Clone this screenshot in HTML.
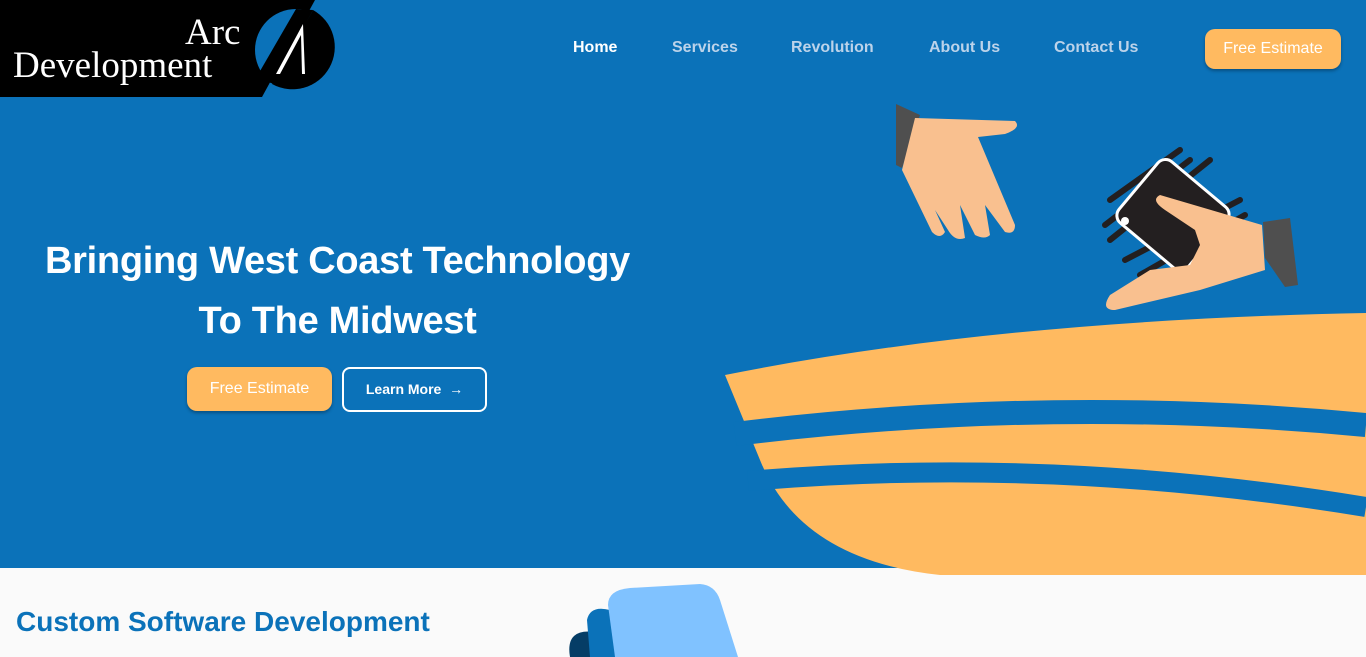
<!DOCTYPE html>
<html><head><meta charset="utf-8"><style>
*{margin:0;padding:0;box-sizing:border-box}
body{width:1366px;height:657px;overflow:hidden;background:#fafafa;font-family:"Liberation Sans",sans-serif;position:relative}
.hero{position:absolute;left:0;top:0;width:1366px;height:568px;background:#0b72b9}
.nav a{position:absolute;top:39px;font-weight:bold;font-size:16px;color:#bcd3ea;text-decoration:none}
.btn{position:absolute;background:#ffba60;color:#fff;border-radius:10px;font-size:16px;text-align:center;box-shadow:0 2px 3px rgba(0,0,0,.3)}
h1{position:absolute;left:0;width:675px;text-align:center;color:#fff;font-size:38px;font-weight:bold;line-height:60px;top:231px;letter-spacing:-0.3px}
</style></head><body>
<div class="hero"></div>
<svg style="position:absolute;left:0;top:0" width="1366" height="657">
<polygon points="0,0 315,0 262,97 0,97" fill="#000"/>
<circle cx="296" cy="50" r="41" fill="#0b72b9"/>
<path d="M313,10 A41,41 0 0 1 272,84 Z" fill="#000"/>
<path d="M296,9 L313,10 L274,84 L256,78 Z" fill="#000"/>
<path d="M276,74 L303,24 L305,74 L302,74 L301,35 L280,74 Z" fill="#fff"/>
<path d="M725,375 Q1000,320 1366,313 L1366,575 L940,575 Q800,560 760,460 Z" fill="#ffba60"/>
<path d="M735,434 Q1050,395 1366,425" stroke="#0b72b9" stroke-width="24" fill="none"/>
<path d="M748,481 Q1050,455 1366,507" stroke="#0b72b9" stroke-width="20" fill="none"/>
<path d="M896,104 L920,115 L902,168 L896,165 Z" fill="#4f4f4f"/>
<path d="M915,118 L1015,121 Q1022,128 1005,134 L978,137 L1015,225 Q1015,235 1005,232 L985,205 L990,235 Q985,240 975,235 L960,205 L965,238 Q955,242 948,230 L935,210 L945,232 Q940,240 932,232 L902,170 Z" fill="#f9c08f"/>
<g stroke="#231f20" stroke-width="6" stroke-linecap="round">
<path d="M1110,200 L1180,150 M1110,240 L1210,160 M1125,260 L1240,200 M1140,275 L1245,215 M1105,225 L1190,160"/>
</g>
<rect x="1128" y="175" width="90" height="80" rx="10" fill="#231f20" stroke="#fff" stroke-width="3" transform="rotate(40 1173 215)"/>
<circle cx="1125" cy="221" r="4" fill="#fff"/>
<path d="M1160,195 Q1150,200 1165,210 L1195,230 L1200,245 L1190,265 L1150,270 L1110,295 Q1100,310 1115,310 L1200,290 L1265,270 L1262,225 Z" fill="#f9c08f"/>
<path d="M1263,222 L1290,218 L1298,285 L1285,287 L1265,258 Z" fill="#4f4f4f"/>
<path d="M570,657 Q565,628 595,632 L610,657 Z" fill="#053d66"/>
<path d="M590,657 L587,620 Q590,605 610,610 L640,657 Z" fill="#0b72b9"/>
<path d="M615,657 L608,605 Q608,590 630,588 L700,584 Q715,585 720,600 L738,657 Z" fill="#80c2ff"/>
</svg>
<div style="position:absolute;left:185px;top:14px;color:#fff;font-family:'Liberation Serif',serif;font-size:37px;line-height:38px">Arc</div>
<div style="position:absolute;left:13px;top:47px;color:#fff;font-family:'Liberation Serif',serif;font-size:37px;line-height:38px">Development</div>
<div class="nav"><a style="left:573px;color:#fff">Home</a><a style="left:672px">Services</a><a style="left:791px">Revolution</a><a style="left:929px">About Us</a><a style="left:1054px">Contact Us</a></div>
<div class="btn" style="left:1205px;top:29px;width:136px;height:40px;line-height:40px">Free Estimate</div>
<h1>Bringing West Coast Technology<br>To The Midwest</h1>
<div class="btn" style="left:187px;top:367px;width:145px;height:44px;line-height:44px">Free Estimate</div>
<div style="position:absolute;left:342px;top:367px;width:145px;height:45px;border:2px solid #fff;border-radius:8px;color:#fff;font-weight:bold;font-size:14px;line-height:41px;text-align:center">Learn More &nbsp;→</div>
<div style="position:absolute;left:16px;top:606px;color:#0b72b9;font-size:28px;font-weight:bold">Custom Software Development</div>
</body></html>
